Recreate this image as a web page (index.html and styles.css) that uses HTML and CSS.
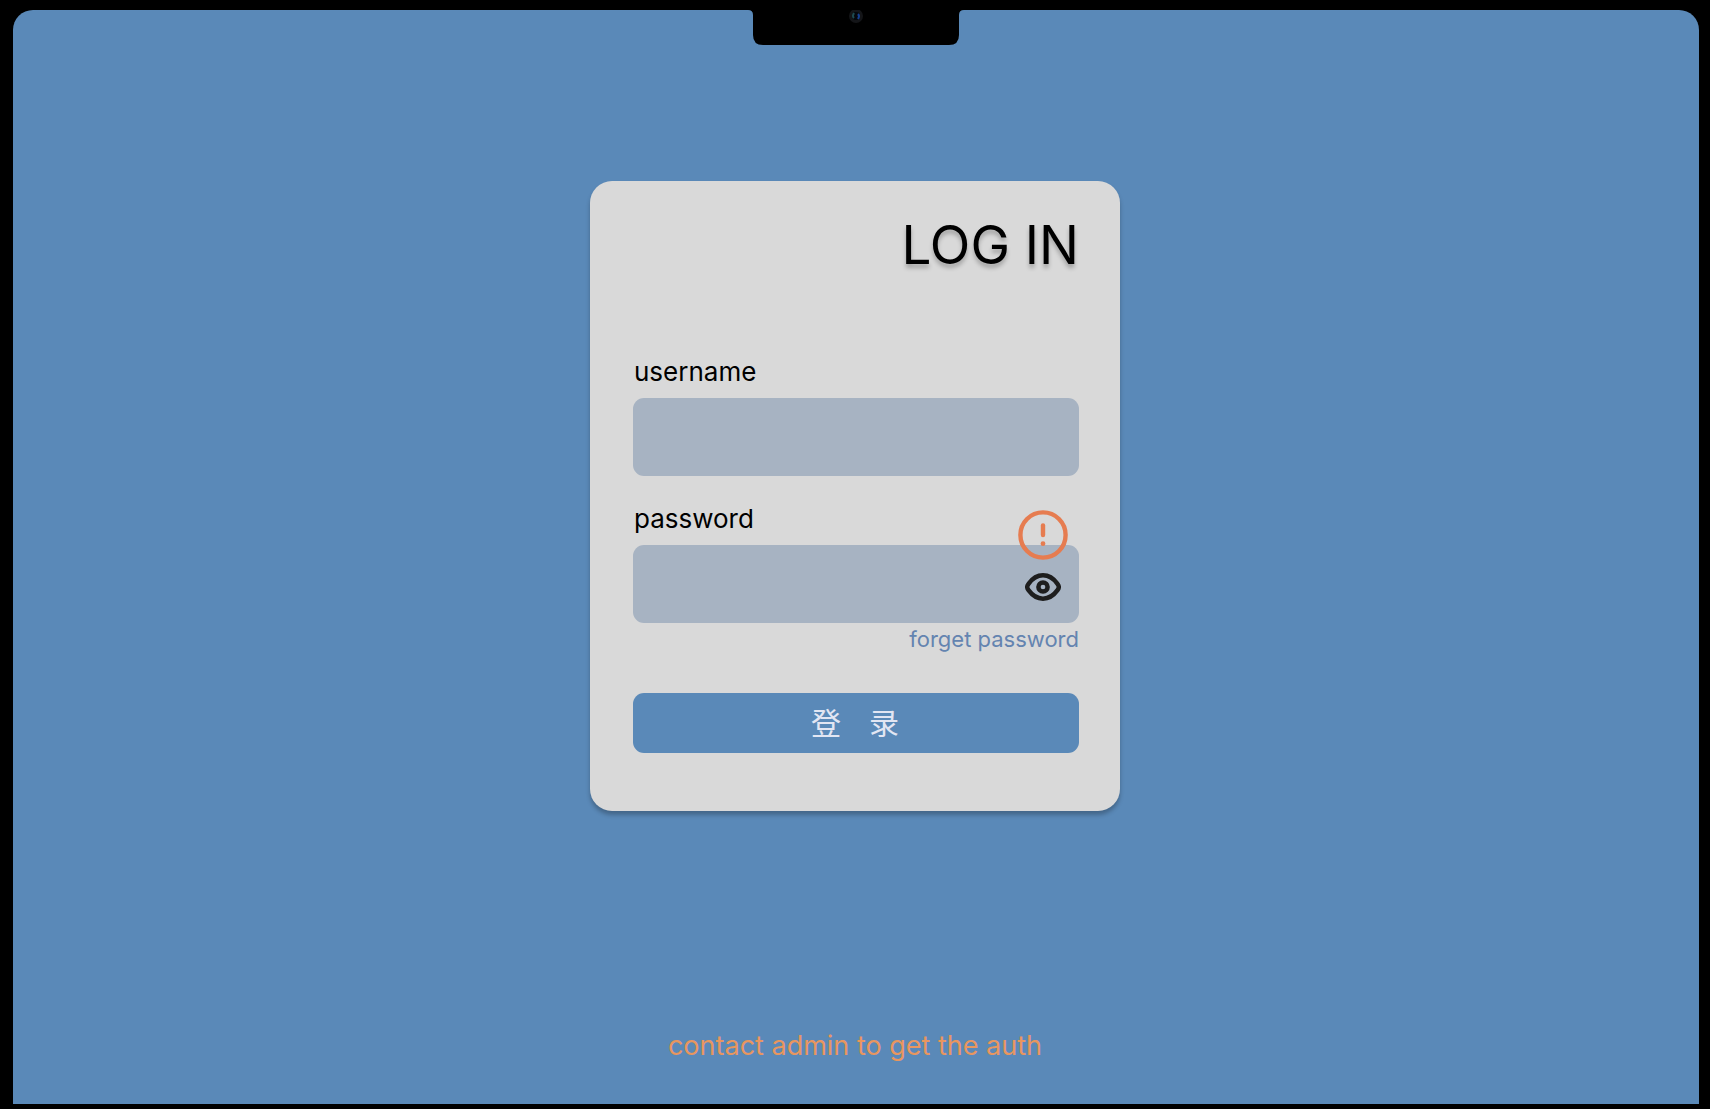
FILE: index.html
```html
<!DOCTYPE html>
<html lang="en">
<head>
<meta charset="utf-8">
<meta name="viewport" content="width=device-width, initial-scale=1">
<title>Log in</title>
<link rel="stylesheet" href="styles.css">
</head>
<body>
<div class="screen">
  <svg class="notch" viewBox="0 0 216 35" aria-hidden="true">
    <path d="M0 0Q5 0 5 5V25Q5 35 15 35H201Q211 35 211 25V5Q211 0 216 0Z" fill="#000"/>
    <circle cx="108" cy="6" r="7" fill="#141518"/>
    <circle cx="108" cy="6" r="4" fill="#05080d"/>
    <path d="M106 3Q104 6 106 8" fill="none" stroke="#1f4a50" stroke-width="2"/>
    <path d="M110 4Q112 6 110 9" fill="none" stroke="#153f90" stroke-width="2"/>
  </svg>
  <main class="card">
    <h1 class="title">LOG IN</h1>
    <form class="form">
      <div class="field">
        <label class="label" for="username">username</label>
        <input class="input" id="username" type="text">
      </div>
      <div class="field">
        <label class="label" for="password">password</label>
        <div class="control">
          <input class="input" id="password" type="password">
          <svg class="alert" viewBox="0 0 50 50" role="img" aria-label="Error">
            <circle cx="25" cy="25" r="22.6" fill="none" stroke="#e67c50" stroke-width="4.4"/>
            <path d="M25 15.5V25" stroke="#e67c50" stroke-width="4.4" stroke-linecap="round"/>
            <circle cx="25" cy="33.7" r="2.4" fill="#e67c50"/>
          </svg>
          <button class="reveal" type="button" aria-label="Show password">
            <svg class="eye" viewBox="0 0 36 28" aria-hidden="true">
              <path d="M2.200 14Q2.200 12.500 3.500 10.800C7 6 12 2.300 18 2.300S29 6 32.500 10.800Q33.800 12.500 33.800 14T32.500 17.200C29 22 24 25.700 18 25.700S7 22 3.500 17.200Q2.200 15.500 2.200 14Z" fill="none" stroke="#1e1e1e" stroke-width="4.500" stroke-linejoin="round"/>
              <circle cx="18" cy="14" r="4.600" fill="none" stroke="#1e1e1e" stroke-width="4.500"/>
            </svg>
          </button>
        </div>
      </div>
      <a class="forgot" href="#">forget password</a>
      <button class="submit" type="submit"><span>登</span><span>录</span></button>
    </form>
  </main>
  <p class="contact">contact admin to get the auth</p>
</div>
</body>
</html>
```
FILE: styles.css
```css
* {
  box-sizing: border-box;
}

body {
  margin: 0;
  min-height: 100vh;
  display: flex;
  padding: 10px 11px 5px 13px;
  background: #000;
  font-family: Inter, "Noto Sans CJK SC", sans-serif;
  color: #000;
}

.screen {
  position: relative;
  flex: 1;
  display: flex;
  flex-direction: column;
  align-items: center;
  padding: 171px 18px 42px 16px;
  border-radius: 20px 20px 0 0;
  background: #5a89b8;
}

.notch {
  position: absolute;
  top: 0;
  left: 50%;
  width: 216px;
  height: 35px;
  margin-left: -108px;
}

.card {
  width: 100%;
  max-width: 530px;
  padding: 32px 41px 58px 43px;
  border-radius: 22px;
  background: #d9d9d9;
  box-shadow: 0 4px 4px rgba(0, 0, 0, 0.25);
}

.title {
  margin: 0 0 79px;
  font-size: 53px;
  line-height: 64px;
  font-weight: 400;
  text-align: right;
  text-shadow: 0 4px 4px rgba(0, 0, 0, 0.25);
}

.form {
  display: flex;
  flex-direction: column;
}

.field {
  display: flex;
  flex-direction: column;
  gap: 10px;
}

.field:first-child {
  margin-bottom: 27px;
}

.label {
  padding-left: 1px;
  font-size: 26px;
  line-height: 32px;
}

.control {
  position: relative;
}

.input {
  display: block;
  width: 100%;
  height: 78px;
  padding: 0 16px;
  border: 0;
  border-radius: 11px;
  background: #a7b3c2;
  font: inherit;
  font-size: 26px;
}

.alert {
  position: absolute;
  top: -35px;
  right: 11px;
  width: 50px;
  height: 50px;
}

.reveal {
  position: absolute;
  top: 28px;
  right: 18px;
  display: flex;
  padding: 0;
  border: 0;
  background: none;
}

.eye {
  width: 36px;
  height: 28px;
}

.forgot {
  align-self: flex-end;
  margin: 2px 0 40px;
  font-size: 22px;
  line-height: 28px;
  color: #6484b0;
  text-decoration: none;
}

.submit {
  display: flex;
  justify-content: center;
  align-items: center;
  gap: 28px;
  height: 60px;
  padding: 0 2px 5px 0;
  border: 0;
  border-radius: 11px;
  background: #5a89b8;
  font: inherit;
  font-size: 30px;
  color: #e2e6f3;
}

.contact {
  margin: auto 0 0;
  font-size: 27px;
  line-height: 32px;
  color: #e8965f;
}
```
